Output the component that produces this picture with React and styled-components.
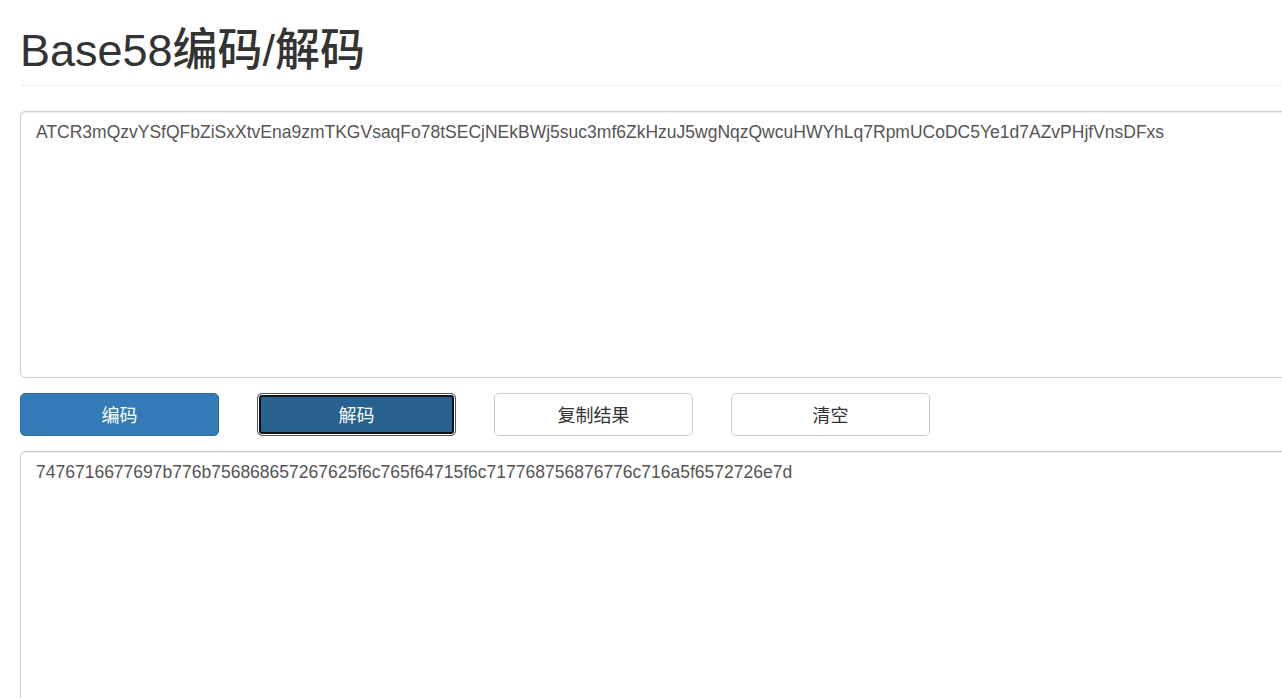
import styled, { createGlobalStyle } from "styled-components";

const GlobalStyle = createGlobalStyle`
  html, body {
    margin: 0;
    padding: 0;
    overflow: hidden;
    background: #fff;
  }
  body {
    font-family: "Liberation Sans", Arial, "Noto Sans CJK SC", sans-serif;
    color: #333;
  }
`;

const Page = styled.div`
  width: 1500px;
  padding: 0 20px;
`;

const Header = styled.div`
  margin: 26px 0 25px;
  padding-bottom: 9px;
  border-bottom: 1px solid #eee;
`;

const Title = styled.h1`
  margin: 0;
  font-size: 45px;
  font-weight: 500;
  line-height: 1.1;
  color: #333;
`;

const TextBox = styled.textarea`
  display: block;
  box-sizing: border-box;
  width: 100%;
  height: ${({ $h }) => $h}px;
  padding: 8px 15px;
  border: 1px solid #ccc;
  border-radius: 5px;
  box-shadow: inset 0 1px 1px rgba(0, 0, 0, 0.075);
  font-family: "Liberation Sans", Arial, sans-serif;
  font-size: 17.5px;
  line-height: 1.42857;
  color: #555;
  resize: none;
  outline: none;
`;

const ButtonRow = styled.div`
  display: flex;
  gap: 38px;
  margin: 15px 0;
`;

const Button = styled.button`
  box-sizing: border-box;
  width: 199px;
  height: 43px;
  border-radius: 5px;
  font-family: "Liberation Sans", Arial, "Noto Sans CJK SC", sans-serif;
  font-size: 18px;
  cursor: pointer;
  border: 1px solid ${({ $variant }) =>
    $variant === "primary" ? "#2e6da4" : $variant === "active" ? "#4a5866" : "#ccc"};
  background: ${({ $variant }) =>
    $variant === "primary" ? "#337ab7" : $variant === "active" ? "#286090" : "#fff"};
  color: ${({ $variant }) => ($variant === "default" ? "#333" : "#fff")};
  ${({ $variant }) =>
    $variant === "active" &&
    "box-shadow: inset 0 0 0 1px #fff, inset 0 0 0 3px #111;"}
`;

export default function App() {
  return (
    <>
      <GlobalStyle />
      <Page>
        <Header>
          <Title>Base58编码/解码</Title>
        </Header>
        <TextBox
          $h={267}
          readOnly
          value="ATCR3mQzvYSfQFbZiSxXtvEna9zmTKGVsaqFo78tSECjNEkBWj5suc3mf6ZkHzuJ5wgNqzQwcuHWYhLq7RpmUCoDC5Ye1d7AZvPHjfVnsDFxs"
        />
        <ButtonRow>
          <Button $variant="primary">编码</Button>
          <Button $variant="active">解码</Button>
          <Button $variant="default">复制结果</Button>
          <Button $variant="default">清空</Button>
        </ButtonRow>
        <TextBox
          $h={267}
          readOnly
          value="7476716677697b776b756868657267625f6c765f64715f6c717768756876776c716a5f6572726e7d"
        />
      </Page>
    </>
  );
}
